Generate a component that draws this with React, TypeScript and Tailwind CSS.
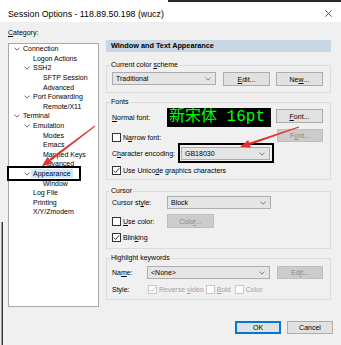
import React from "react";

const F = "font-['Liberation_Sans',Arial,sans-serif]";

function Check({ checked = false, disabled = false }: { checked?: boolean; disabled?: boolean }) {
  return (
    <div
      className={`w-[9px] h-[9px] shrink-0 border bg-white flex items-center justify-center ${
        disabled ? "border-[#c8c8c8]" : "border-[#333333]"
      }`}
    >
      {checked && (
        <svg width="7" height="7" viewBox="0 0 7 7">
          <path d="M0.8 3.6 L2.7 5.5 L6.2 1.2" fill="none" stroke={disabled ? "#b8b8b8" : "#222222"} strokeWidth="0.9" />
        </svg>
      )}
    </div>
  );
}

function Chevron({ color = "#555555" }: { color?: string }) {
  return (
    <svg width="6" height="4" viewBox="0 0 6 4" className="shrink-0">
      <path d="M0.5 0.6 L3 3.2 L5.5 0.6" fill="none" stroke={color} strokeWidth="0.8" />
    </svg>
  );
}

function Combo({ text, className = "" }: { text: string; className?: string }) {
  return (
    <div
      className={`h-[13px] border border-[#adadad] bg-[#e5e5e5] flex items-center justify-between pl-[3px] pr-[4px] ${className}`}
    >
      <span>{text}</span>
      <Chevron color="#606060" />
    </div>
  );
}

function Btn({
  children,
  className = "",
  disabled = false,
}: {
  children: React.ReactNode;
  className?: string;
  disabled?: boolean;
}) {
  return (
    <div
      className={`shrink-0 border flex items-center justify-center ${
        disabled ? "bg-[#cccccc] border-[#bfbfbf] text-[#8a8a8a]" : "bg-[#e1e1e1] border-[#adadad] text-black"
      } ${className}`}
    >
      {children}
    </div>
  );
}

function Group({ label, className = "", children }: { label: React.ReactNode; className?: string; children: React.ReactNode }) {
  return (
    <div className={`border border-[#dcdcdc] ${className}`}>
      <div className="-mt-[6px] ml-[3px] px-[1px] w-fit h-[9px] bg-[#f0f0f0]">{label}</div>
      {children}
    </div>
  );
}

type Node = { t: string; l: number; c?: boolean; sel?: boolean };

const tree: Node[] = [
  { t: "Connection", l: 0, c: true },
  { t: "Logon Actions", l: 1 },
  { t: "SSH2", l: 1, c: true },
  { t: "SFTP Session", l: 2 },
  { t: "Advanced", l: 2 },
  { t: "Port Forwarding", l: 1, c: true },
  { t: "Remote/X11", l: 2 },
  { t: "Terminal", l: 0, c: true },
  { t: "Emulation", l: 1, c: true },
  { t: "Modes", l: 2 },
  { t: "Emacs", l: 2 },
  { t: "Mapped Keys", l: 2 },
  { t: "Advanced", l: 2 },
  { t: "Appearance", l: 1, c: true, sel: true },
  { t: "Window", l: 2 },
  { t: "Log File", l: 1 },
  { t: "Printing", l: 1 },
  { t: "X/Y/Zmodem", l: 1 },
];

const chevPad = ["pl-[5px]", "pl-[15px]", "pl-[25px]"];
const leafPad = ["pl-[14px]", "pl-[24px]", "pl-[34px]"];

export default function App() {
  return (
    <div className={`relative w-[341px] h-[345px] overflow-hidden bg-[#f0f0f0] text-[7px] leading-[9px] text-black ${F}`}>
      {/* Title bar */}
      <div className="h-[22px] bg-white flex items-center justify-between pl-[8px] pr-[9px] pt-[5px]">
        <span className="text-[8.8px] leading-[10px]">Session Options - 118.89.50.198 (wucz)</span>
        <svg width="7" height="7" viewBox="0 0 7 7">
          <path d="M0.3 0.3 L6.7 6.7 M6.7 0.3 L0.3 6.7" stroke="#333333" strokeWidth="0.8" />
        </svg>
      </div>

      <div className="flex items-start">
        {/* Left: category tree */}
        <div className="ml-[8px] w-[91px] pt-[6px]">
          <div className="h-[9px]">
            <u>C</u>ategory:
          </div>
          <div className="mt-[6px] h-[264px] border border-[#a8a8a8] bg-white">
            {tree.map((n, i) => (
              <div key={i} className={`h-[9.6px] flex items-center ${n.c ? chevPad[n.l] : leafPad[n.l]}`}>
                {n.c && (
                  <span className="w-[9px] shrink-0 flex items-center">
                    <Chevron color="#444444" />
                  </span>
                )}
                {n.sel ? (
                  <span className="-ml-[2px] px-[2px] h-[9px] bg-[#cce8ff] whitespace-nowrap">{n.t}</span>
                ) : (
                  <span className="whitespace-nowrap">{n.t}</span>
                )}
              </div>
            ))}
          </div>
        </div>

        {/* Right panel */}
        <div className="ml-[7px] w-[225px] pt-[18px]">
          <div className="h-[12px] bg-[#c9d6e3] pl-[5px] font-bold text-[7.3px] leading-[12px]">
            Window and Text Appearance
          </div>

          <Group
            className="mt-[13px] h-[28px]"
            label={
              <>
                Current color <u>s</u>cheme
              </>
            }
          >
            <div className="mt-[3px] pl-[5px] flex items-start">
              <Combo text="Traditional" className="w-[104px]" />
              <Btn className="ml-[7px] w-[47px] h-[14px]">
                <u>E</u>dit...
              </Btn>
              <Btn className="ml-[6px] w-[47px] h-[14px]">
                Ne<u>w</u>...
              </Btn>
            </div>
          </Group>

          <Group className="mt-[9px] h-[78px]" label="Fonts">
            <div className="mt-[2px] pl-[5px] flex items-start">
              <div className="w-[55px] h-[19px] flex items-center">
                <span>
                  <u>N</u>ormal font:
                </span>
              </div>
              <div className="w-[104px] h-[19px] bg-black text-[#00ff00] text-[16px] leading-[19px] pl-[2px] overflow-hidden whitespace-nowrap font-['Liberation_Mono','Noto_Sans_CJK_SC',monospace]">
                新宋体 16pt
              </div>
              <Btn className="ml-[5px] mt-[1px] w-[47px] h-[14px]">
                <u>F</u>ont...
              </Btn>
            </div>
            <div className="mt-[2px] pl-[5px] flex h-[13px]">
              <div className="w-[165px] flex items-end">
                <div className="flex items-center gap-[2px] h-[9px]">
                  <Check />
                  <span>
                    N<u>a</u>rrow font:
                  </span>
                </div>
              </div>
              <Btn disabled className="w-[46px] h-[13px]">
                F<u>o</u>nt...
              </Btn>
            </div>
            <div className="mt-[5px] pl-[5px] flex items-center h-[13px]">
              <div className="w-[69px]">
                C<u>h</u>aracter encoding:
              </div>
              <Combo text="GB18030" className="w-[89px]" />
            </div>
            <div className="mt-[4px] pl-[5px] flex items-center h-[13px] gap-[2px]">
              <Check checked />
              <span>
                Use Unico<u>d</u>e graphics characters
              </span>
            </div>
          </Group>

          <Group className="mt-[11px] h-[58px]" label="Cursor">
            <div className="mt-[1px] pl-[5px] flex items-center">
              <div className="w-[55px]">
                Cursor st<u>y</u>le:
              </div>
              <Combo text="Block" className="w-[104px]" />
            </div>
            <div className="mt-[5px] pl-[5px] flex items-center h-[14px]">
              <div className="w-[55px] flex items-center gap-[2px]">
                <Check />
                <span>
                  <u>U</u>se color:
                </span>
              </div>
              <Btn disabled className="w-[47px] h-[14px]">
                Colo<u>r</u>...
              </Btn>
            </div>
            <div className="mt-[3px] pl-[5px] flex items-center h-[12px] gap-[2px]">
              <Check checked />
              <span>
                Blin<u>k</u>ing
              </span>
            </div>
          </Group>

          <Group className="mt-[9px] h-[42px]" label="Highlight keywords">
            <div className="mt-[4px] pl-[5px] flex items-center">
              <div className="w-[35px]">
                Na<u>m</u>e:
              </div>
              <Combo text="<None>" className="w-[123px]" />
              <Btn disabled className="ml-[7px] w-[46px] h-[13px]">
                Ed<u>i</u>t...
              </Btn>
            </div>
            <div className="mt-[4px] pl-[5px] flex items-center h-[13px]">
              <div className="w-[36px]">Style:</div>
              <Check checked disabled />
              <span className="ml-[2px] text-[#a0a0a0]">
                Reverse <u>v</u>ideo
              </span>
              <div className="ml-[2px]">
                <Check disabled />
              </div>
              <span className="ml-[2px] text-[#a0a0a0]">
                <u>B</u>old
              </span>
              <div className="ml-[4px]">
                <Check disabled />
              </div>
              <span className="ml-[2px] text-[#a0a0a0]">Color</span>
            </div>
          </Group>
        </div>
      </div>

      {/* Footer buttons */}
      <div className="mt-[14px] flex justify-end gap-[6px] pr-[8px]">
        <Btn className="w-[46px] h-[13px] !border-[#0078d7] border-2">OK</Btn>
        <Btn className="w-[46px] h-[13px]">Cancel</Btn>
      </div>

      {/* Annotation overlay (screenshot markup and window edges) */}
      <svg className="absolute inset-0 pointer-events-none" width="341" height="345" viewBox="0 0 341 345">
        <rect x="168" y="0" width="173" height="2" fill="#2a2a2a" />
        <rect x="1.5" y="222" width="1.5" height="123" fill="#3a3a3a" />
        <rect x="8" y="167" width="72" height="13" fill="none" stroke="#000000" strokeWidth="2" />
        <rect x="179" y="144" width="94" height="18" fill="none" stroke="#000000" strokeWidth="2" />
        <polygon points="95.3,126.4 50.7,161 49.3,159 94.7,125.6" fill="#e5322d" />
        <polygon points="42,166 52.4,163.2 47.6,156.8" fill="#e5322d" />
        <polygon points="299.2,127.5 249.9,144.9 249.1,142.7 298.8,126.5" fill="#e5322d" />
        <polygon points="240,147 250.8,147.6 248.2,140" fill="#e5322d" />
      </svg>
    </div>
  );
}
